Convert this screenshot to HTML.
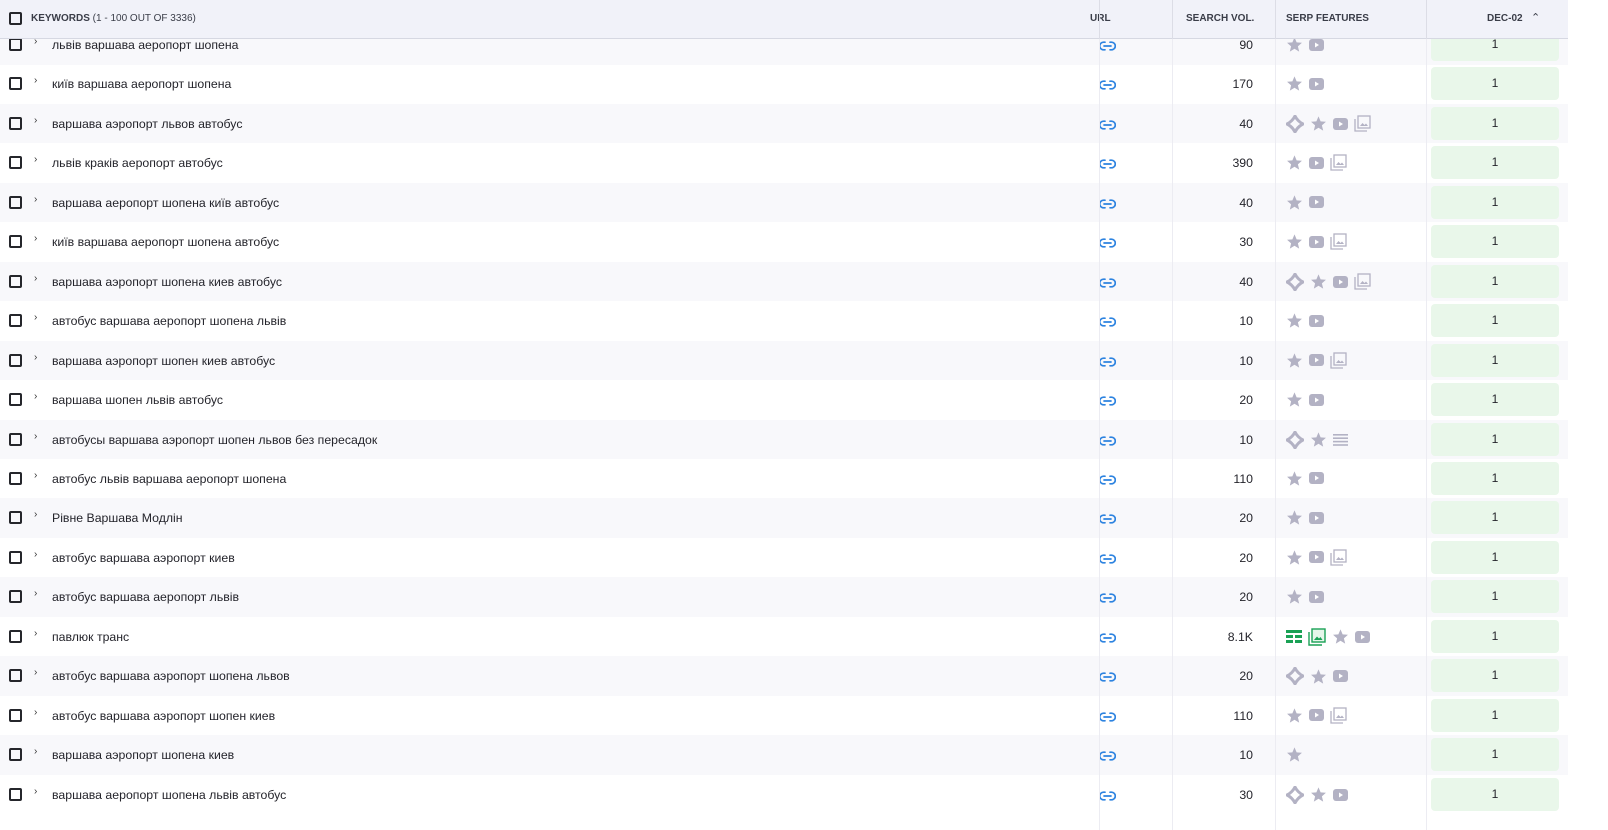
<!DOCTYPE html>
<html><head><meta charset="utf-8"><style>
*{box-sizing:border-box;margin:0;padding:0}
body{width:1608px;height:830px;overflow:hidden;background:#fff;font-family:"Liberation Sans","DejaVu Sans",sans-serif;color:#24242b;position:relative}
.hdr{position:absolute;top:0;left:0;width:1568px;height:39px;background:#f1f2f9;border-bottom:1px solid #d6d8e2;font-size:10px;font-weight:bold;color:#3a3d48;z-index:2}
.hdr div{position:absolute;top:0;height:39px;line-height:37px}
.vl{position:absolute;top:0;width:1px;background:#dcdde6}
.row{position:absolute;left:0;width:1568px;height:39.5px}
.row.g{background:#f8f8fb}
.cb{position:absolute;left:9px;width:13px;height:13px;border:2px solid #25262b;border-radius:2px}
.chev{position:absolute;left:34px;font-size:10px;color:#333}
.kw{position:absolute;left:52px;font-size:12.3px}
.lnk{position:absolute;left:1099px}
.vol{position:absolute;right:315px;font-size:12.3px;text-align:right}
.feat{position:absolute;left:1286px;display:flex;gap:6px;align-items:center}
.pos{position:absolute;left:1431px;width:128px;height:33px;background:#e9f7ea;border-radius:4px;text-align:center;line-height:33px;font-size:12px}
</style></head><body>
<div class="hdr">
<div style="left:9px;top:12px;height:13px;width:13px;border:2px solid #25262b;border-radius:2px"></div>
<div style="left:31px">KEYWORDS <span style="font-weight:normal">(1 - 100 OUT OF 3336)</span></div>
<div style="left:1090px">URL</div>
<div style="left:1186px">SEARCH VOL.</div>
<div style="left:1286px">SERP FEATURES</div>
<div style="left:1487px">DEC-02</div>
<div style="left:1531px;font-weight:normal;font-size:11px">&#8963;</div>
<div class="vl" style="left:1099px;height:39px;top:0"></div>
<div class="vl" style="left:1172px;height:39px;top:0"></div>
<div class="vl" style="left:1275px;height:39px;top:0"></div>
<div class="vl" style="left:1426px;height:39px;top:0"></div>
</div>
<div id="rows"></div>
<div class="vl" style="left:1099px;height:830px;background:#ececf2"></div>
<div class="vl" style="left:1172px;height:830px;background:#ececf2"></div>
<div class="vl" style="left:1275px;height:830px;background:#ececf2"></div>
<div class="vl" style="left:1426px;height:830px;background:#ececf2"></div>
<script>
const C='#b3b2c4';
const I={
s:`<svg width="17" height="17" viewBox="0 0 24 24"><path fill="${C}" d="M12 2l3 7 7.5.6-5.7 5 1.8 7.4L12 18l-6.6 4 1.8-7.4-5.7-5L9 9z"/></svg>`,
y:`<svg width="15" height="12" viewBox="0 0 15 12"><rect width="15" height="12" rx="3" fill="${C}"/><path d="M6 3.5v5l4-2.5z" fill="#fff"/></svg>`,
i:`<svg width="17" height="17" viewBox="0 0 17 17"><path d="M1 4v12h12" fill="none" stroke="${C}" stroke-width="1.3"/><rect x="4" y="1" width="12" height="12" fill="none" stroke="${C}" stroke-width="1.3"/><path d="M6 11l2.5-3 2 2 1.5-1.5 2 2.5z" fill="${C}"/></svg>`,
d:`<svg width="18" height="18" viewBox="0 0 18 18"><path d="M9 1C11 5 13 7 17 9 13 11 11 13 9 17 7 13 5 11 1 9 5 7 7 5 9 1z" fill="none" stroke="${C}" stroke-width="3" stroke-linejoin="round"/></svg>`,
l:`<svg width="15" height="12" viewBox="0 0 15 12"><g fill="${C}"><rect y="0" width="15" height="1.6"/><rect y="3.4" width="15" height="1.6"/><rect y="6.8" width="15" height="1.6"/><rect y="10.2" width="15" height="1.6"/></g></svg>`,
t:`<svg width="16" height="13" viewBox="0 0 16 13"><g fill="#1aa155"><rect width="16" height="3"/><rect y="5" width="7" height="3"/><rect x="9" y="5" width="7" height="3"/><rect y="10" width="7" height="3"/><rect x="9" y="10" width="7" height="3"/></g></svg>`,
g:`<svg width="18" height="18" viewBox="0 0 18 18"><path d="M1 4v13h13" fill="none" stroke="#1aa155" stroke-width="1.4"/><rect x="4" y="1" width="13" height="13" fill="#e6f6ea" stroke="#1aa155" stroke-width="1.4"/><path d="M6 12l3-3.5 2 2 1.5-1.5 2 3z" fill="#1aa155"/></svg>`
};
const link=`<svg width="17" height="10" viewBox="0 0 17 10"><path d="M6 1.2H4.5a3.8 3.8 0 000 7.6H6M11 1.2h1.5a3.8 3.8 0 010 7.6H11M5 5h7" fill="none" stroke="#2d83e0" stroke-width="1.7" stroke-linecap="round"/></svg>`;
const D=[
["львів варшава аеропорт шопена","90","sy"],
["київ варшава аеропорт шопена","170","sy"],
["варшава аэропорт львов автобус","40","dsyi"],
["львів краків аеропорт автобус","390","syi"],
["варшава аеропорт шопена київ автобус","40","sy"],
["київ варшава аеропорт шопена автобус","30","syi"],
["варшава аэропорт шопена киев автобус","40","dsyi"],
["автобус варшава аеропорт шопена львів","10","sy"],
["варшава аэропорт шопен киев автобус","10","syi"],
["варшава шопен львів автобус","20","sy"],
["автобусы варшава аэропорт шопен львов без пересадок","10","dsl"],
["автобус львів варшава аеропорт шопена","110","sy"],
["Рівне Варшава Модлін","20","sy"],
["автобус варшава аэропорт киев","20","syi"],
["автобус варшава аеропорт львів","20","sy"],
["павлюк транс","8.1K","tgsy"],
["автобус варшава аэропорт шопена львов","20","dsy"],
["автобус варшава аэропорт шопен киев","110","syi"],
["варшава аэропорт шопена киев","10","s"],
["варшава аеропорт шопена львів автобус","30","dsy"]];
let h='';
D.forEach((r,k)=>{const c=45+39.45*k;const top=c-20;
h+=`<div class="row ${k%2==0?'g':''}" style="top:${top}px">
<div class="cb" style="top:13px"></div>
<div class="chev" style="top:11px">&#8250;</div>
<div class="kw" style="top:13px">${r[0]}</div>
<div class="lnk" style="top:13px;left:1099px">${link}</div>
<div class="vol" style="top:13px">${r[1]}</div>
<div class="feat" style="top:11px">${[...r[2]].map(x=>I[x]).join('')}</div>
<div class="pos" style="top:3px">1</div></div>`;});
document.getElementById('rows').innerHTML=h;
</script>
</body></html>
